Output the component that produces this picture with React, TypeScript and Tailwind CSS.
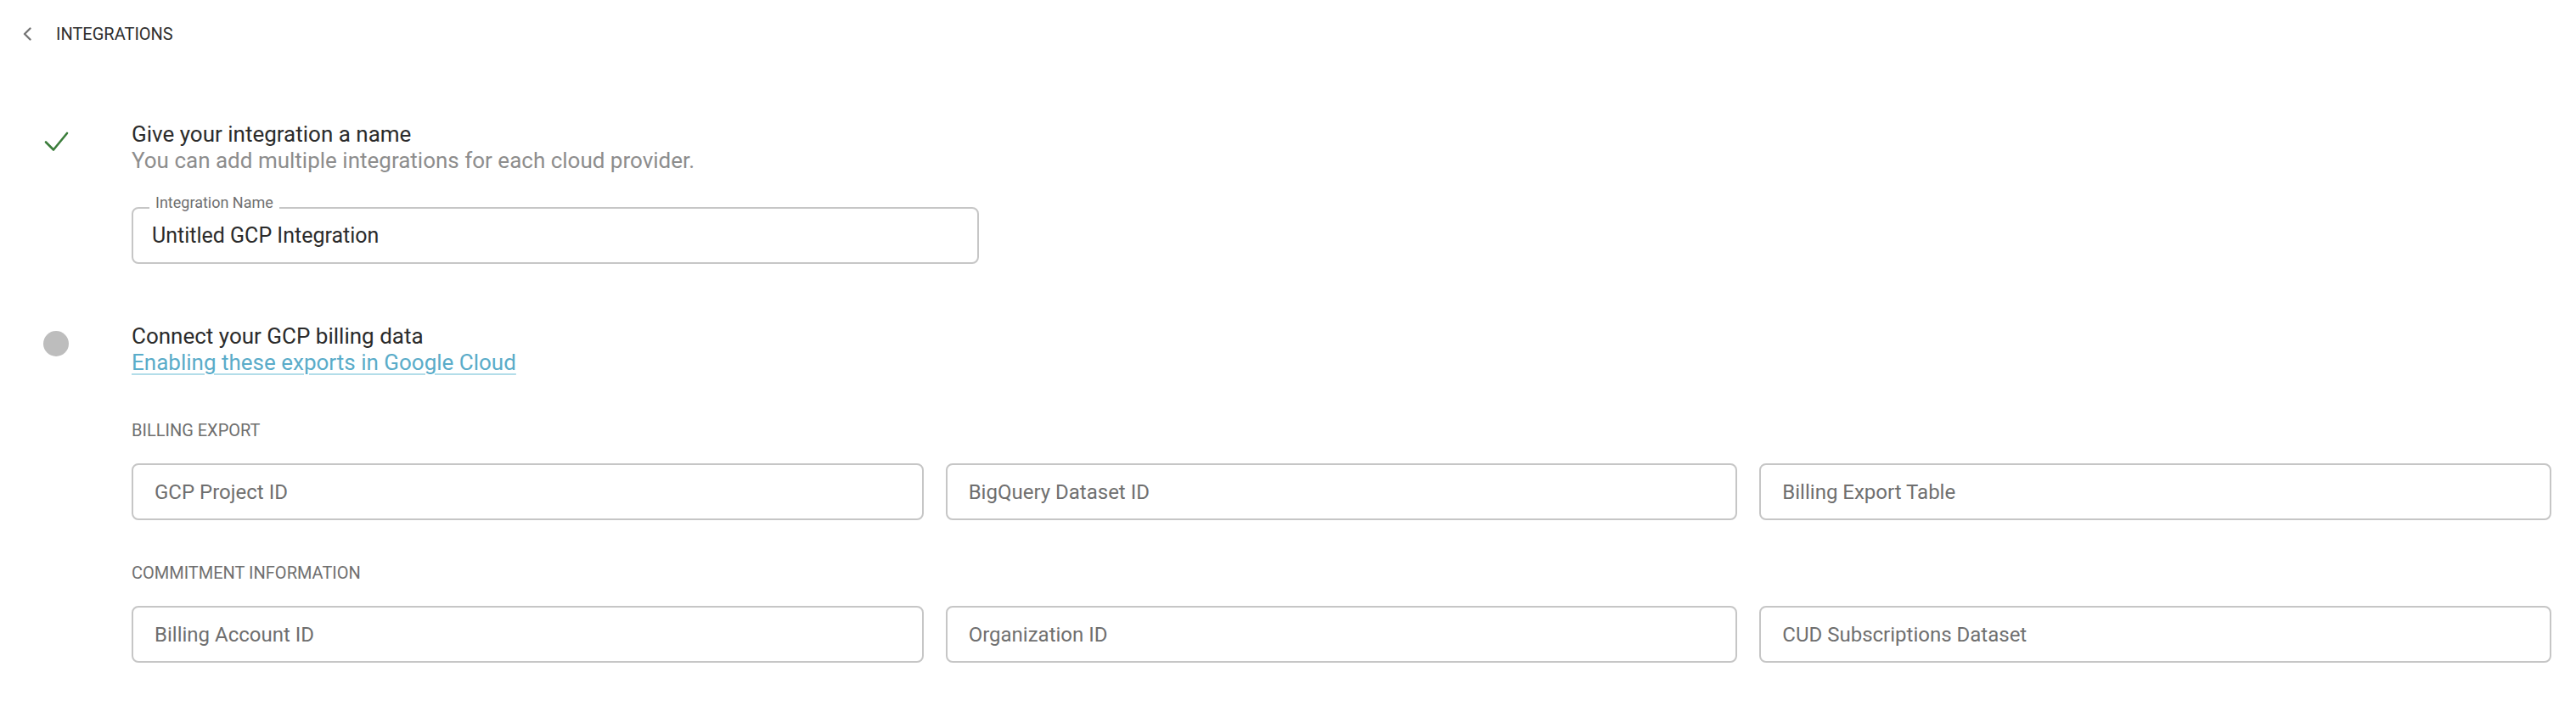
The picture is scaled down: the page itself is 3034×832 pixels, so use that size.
import React from 'react';

type FieldProps = {
  label?: string;
  placeholder?: string;
  defaultValue?: string;
  className?: string;
};

// Outlined text field; a label, when given, sits in a notch on the top border
function TextField({ label, placeholder, defaultValue, className = '' }: FieldProps) {
  return (
    <div className={`relative h-[67px] rounded-[8px] border-2 border-[#c6c6c6] bg-white ${className}`}>
      {label && (
        <span className="absolute -top-[17px] left-[19px] bg-white px-[7px] text-[18px] leading-[20px] text-[#6f6f6f]">
          {label}
        </span>
      )}
      <input
        className={`h-full w-full rounded-[6px] bg-transparent text-[#2b2b2b] outline-none placeholder:text-[#6f6f6f] ${
          label ? 'pl-[22px] text-[25px]' : 'pl-[25px] text-[24px]'
        }`}
        placeholder={placeholder}
        defaultValue={defaultValue}
      />
    </div>
  );
}

function StepIcon({ done }: { done: boolean }) {
  if (done) {
    return (
      <svg width="30" height="30" viewBox="0 0 30 30" fill="none">
        <path d="M3 15.5 L12 24.5 L28 5" stroke="#3b7d3b" strokeWidth="2.6" strokeLinecap="round" strokeLinejoin="round" />
      </svg>
    );
  }
  return <div className="h-[30px] w-[30px] rounded-full bg-[#bdbdbd]" />;
}

function Step({ done, children, className = '' }: { done: boolean; children: React.ReactNode; className?: string }) {
  return (
    <section className={`flex ${className}`}>
      <div className="w-[155px] shrink-0 pl-[51px] pt-[9px]">
        <StepIcon done={done} />
      </div>
      <div className="min-w-0 flex-1 pr-[29px]">{children}</div>
    </section>
  );
}

const SectionLabel = ({ children, className = '' }: { children: React.ReactNode; className?: string }) => (
  <div className={`text-[20px] uppercase leading-[24px] text-[#6f6f6f] ${className}`}>{children}</div>
);

const billingFields = ['GCP Project ID', 'BigQuery Dataset ID', 'Billing Export Table'];
const commitmentFields = ['Billing Account ID', 'Organization ID', 'CUD Subscriptions Dataset'];

export default function App() {
  return (
    <div className="min-h-screen bg-white font-['Roboto',sans-serif] text-[#2b2b2b]">
      <header className="flex h-[80px] items-center pl-[27px]">
        <button className="flex items-center gap-[29px]">
          <svg width="10" height="16" viewBox="0 0 10 16" fill="none">
            <path d="M8.5 1.5 L2 8 L8.5 14.5" stroke="#757575" strokeWidth="2.4" strokeLinecap="round" strokeLinejoin="round" />
          </svg>
          <span className="text-[20px] leading-[24px] text-[#2f2f2f]">INTEGRATIONS</span>
        </button>
      </header>

      <main className="pt-[63px]">
        <Step done>
          <h2 className="text-[26px] leading-[31px] text-[#2b2b2b]">Give your integration a name</h2>
          <p className="text-[26px] leading-[31px] text-[#8d8d8d]">
            You can add multiple integrations for each cloud provider.
          </p>
          <TextField className="mt-[39px] w-[998px]" label="Integration Name" defaultValue="Untitled GCP Integration" />
        </Step>

        <Step done={false} className="mt-[70px]">
          <h2 className="text-[26px] leading-[31px] text-[#2b2b2b]">Connect your GCP billing data</h2>
          <a
            href="#"
            className="text-[26px] leading-[31px] text-[#5aacc9] underline decoration-[#b3dde9] decoration-2 underline-offset-[4px]"
          >
            Enabling these exports in Google Cloud
          </a>

          <SectionLabel className="mt-[52px]">Billing Export</SectionLabel>
          <div className="mt-[27px] grid grid-cols-3 gap-x-[26px]">
            {billingFields.map((f) => (
              <TextField key={f} placeholder={f} />
            ))}
          </div>

          <SectionLabel className="mt-[50px]">Commitment Information</SectionLabel>
          <div className="mt-[27px] grid grid-cols-3 gap-x-[26px]">
            {commitmentFields.map((f) => (
              <TextField key={f} placeholder={f} />
            ))}
          </div>
        </Step>
      </main>
    </div>
  );
}
